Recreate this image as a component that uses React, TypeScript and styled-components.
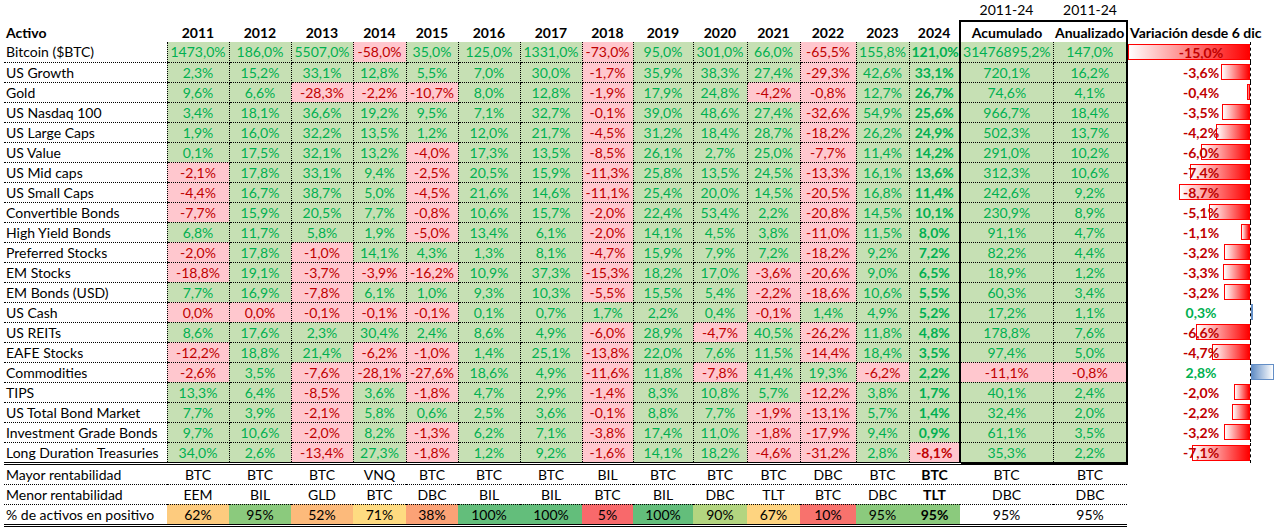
import React from 'react';
import styled, { createGlobalStyle, css } from 'styled-components';

type Tone = 'pos' | 'neg';

type Asset = {
  name: string;
  values: number[];
  acum: number;
  anual: number;
  change: number;
};

const YEARS = [2011, 2012, 2013, 2014, 2015, 2016, 2017, 2018, 2019, 2020, 2021, 2022, 2023, 2024];
const COL_WIDTHS = [163, 62, 62, 62, 53, 52, 62, 62, 51, 60, 54, 53, 56, 53, 51, 93, 74, 146];

// px per 1% on the data bar (15% fills the negative side)
const BAR_SCALE = 122 / 15;

const ASSETS: Asset[] = [
  { name: 'Bitcoin ($BTC)', values: [1473, 186, 5507, -58, 35, 125, 1331, -73, 95, 301, 66, -65.5, 155.8, 121], acum: 31476895.2, anual: 147, change: -15 },
  { name: 'US Growth', values: [2.3, 15.2, 33.1, 12.8, 5.5, 7, 30, -1.7, 35.9, 38.3, 27.4, -29.3, 42.6, 33.1], acum: 720.1, anual: 16.2, change: -3.6 },
  { name: 'Gold', values: [9.6, 6.6, -28.3, -2.2, -10.7, 8, 12.8, -1.9, 17.9, 24.8, -4.2, -0.8, 12.7, 26.7], acum: 74.6, anual: 4.1, change: -0.4 },
  { name: 'US Nasdaq 100', values: [3.4, 18.1, 36.6, 19.2, 9.5, 7.1, 32.7, -0.1, 39, 48.6, 27.4, -32.6, 54.9, 25.6], acum: 966.7, anual: 18.4, change: -3.5 },
  { name: 'US Large Caps', values: [1.9, 16, 32.2, 13.5, 1.2, 12, 21.7, -4.5, 31.2, 18.4, 28.7, -18.2, 26.2, 24.9], acum: 502.3, anual: 13.7, change: -4.2 },
  { name: 'US Value', values: [0.1, 17.5, 32.1, 13.2, -4, 17.3, 13.5, -8.5, 26.1, 2.7, 25, -7.7, 11.4, 14.2], acum: 291, anual: 10.2, change: -6 },
  { name: 'US Mid caps', values: [-2.1, 17.8, 33.1, 9.4, -2.5, 20.5, 15.9, -11.3, 25.8, 13.5, 24.5, -13.3, 16.1, 13.6], acum: 312.3, anual: 10.6, change: -7.4 },
  { name: 'US Small Caps', values: [-4.4, 16.7, 38.7, 5, -4.5, 21.6, 14.6, -11.1, 25.4, 20, 14.5, -20.5, 16.8, 11.4], acum: 242.6, anual: 9.2, change: -8.7 },
  { name: 'Convertible Bonds', values: [-7.7, 15.9, 20.5, 7.7, -0.8, 10.6, 15.7, -2, 22.4, 53.4, 2.2, -20.8, 14.5, 10.1], acum: 230.9, anual: 8.9, change: -5.1 },
  { name: 'High Yield Bonds', values: [6.8, 11.7, 5.8, 1.9, -5, 13.4, 6.1, -2, 14.1, 4.5, 3.8, -11, 11.5, 8], acum: 91.1, anual: 4.7, change: -1.1 },
  { name: 'Preferred Stocks', values: [-2, 17.8, -1, 14.1, 4.3, 1.3, 8.1, -4.7, 15.9, 7.9, 7.2, -18.2, 9.2, 7.2], acum: 82.2, anual: 4.4, change: -3.2 },
  { name: 'EM Stocks', values: [-18.8, 19.1, -3.7, -3.9, -16.2, 10.9, 37.3, -15.3, 18.2, 17, -3.6, -20.6, 9, 6.5], acum: 18.9, anual: 1.2, change: -3.3 },
  { name: 'EM Bonds (USD)', values: [7.7, 16.9, -7.8, 6.1, 1, 9.3, 10.3, -5.5, 15.5, 5.4, -2.2, -18.6, 10.6, 5.5], acum: 60.3, anual: 3.4, change: -3.2 },
  { name: 'US Cash', values: [0, 0, -0.1, -0.1, -0.1, 0.1, 0.7, 1.7, 2.2, 0.4, -0.1, 1.4, 4.9, 5.2], acum: 17.2, anual: 1.1, change: 0.3 },
  { name: 'US REITs', values: [8.6, 17.6, 2.3, 30.4, 2.4, 8.6, 4.9, -6, 28.9, -4.7, 40.5, -26.2, 11.8, 4.8], acum: 178.8, anual: 7.6, change: -6.6 },
  { name: 'EAFE Stocks', values: [-12.2, 18.8, 21.4, -6.2, -1, 1.4, 25.1, -13.8, 22, 7.6, 11.5, -14.4, 18.4, 3.5], acum: 97.4, anual: 5, change: -4.7 },
  { name: 'Commodities', values: [-2.6, 3.5, -7.6, -28.1, -27.6, 18.6, 4.9, -11.6, 11.8, -7.8, 41.4, 19.3, -6.2, 2.2], acum: -11.1, anual: -0.8, change: 2.8 },
  { name: 'TIPS', values: [13.3, 6.4, -8.5, 3.6, -1.8, 4.7, 2.9, -1.4, 8.3, 10.8, 5.7, -12.2, 3.8, 1.7], acum: 40.1, anual: 2.4, change: -2 },
  { name: 'US Total Bond Market', values: [7.7, 3.9, -2.1, 5.8, 0.6, 2.5, 3.6, -0.1, 8.8, 7.7, -1.9, -13.1, 5.7, 1.4], acum: 32.4, anual: 2, change: -2.2 },
  { name: 'Investment Grade Bonds', values: [9.7, 10.6, -2, 8.2, -1.3, 6.2, 7.1, -3.8, 17.4, 11, -1.8, -17.9, 9.4, 0.9], acum: 61.1, anual: 3.5, change: -3.2 },
  { name: 'Long Duration Treasuries', values: [34, 2.6, -13.4, 27.3, -1.8, 1.2, 9.2, -1.6, 14.1, 18.2, -4.6, -31.2, 2.8, -8.1], acum: 35.3, anual: 2.2, change: -7.1 },
];

const BEST = ['BTC', 'BTC', 'BTC', 'VNQ', 'BTC', 'BTC', 'BTC', 'BIL', 'BTC', 'BTC', 'BTC', 'DBC', 'BTC', 'BTC', 'BTC', 'BTC'];
const WORST = ['EEM', 'BIL', 'GLD', 'BTC', 'DBC', 'BIL', 'BIL', 'BTC', 'BIL', 'DBC', 'TLT', 'BTC', 'DBC', 'TLT', 'DBC', 'DBC'];
const POSITIVE = [62, 95, 52, 71, 38, 100, 100, 5, 100, 90, 67, 10, 95, 95, 95, 95];

const pct = (v: number) => `${v.toFixed(1).replace('.', ',')}%`;
const toneOf = (v: number): Tone => (v > 0 ? 'pos' : 'neg');

// three colour scale, red -> yellow -> green, midpoint at the 50th percentile
const mix = (a: number[], b: number[], t: number) => a.map((c, i) => Math.round(c + (b[i] - c) * t));
const scaleColor = (v: number) => {
  const red = [248, 105, 107];
  const yellow = [255, 235, 132];
  const green = [99, 190, 123];
  const min = 5;
  const mid = 80.5;
  const max = 100;
  const c = v <= mid ? mix(red, yellow, (v - min) / (mid - min)) : mix(yellow, green, (v - mid) / (max - mid));
  return `rgb(${c.join(',')})`;
};

const GlobalStyle = createGlobalStyle`
  body {
    margin: 0;
    background: #ffffff;
    font-family: Lato, "Liberation Sans", sans-serif;
    color: #000000;
  }
`;

const Sheet = styled.table`
  margin-left: 4px;
  border-collapse: collapse;
  table-layout: fixed;
  width: 1269px;
  font-size: 14px;
  white-space: nowrap;

  td {
    height: 20px;
    padding: 1px 2px 0;
    box-sizing: border-box;
    line-height: 18px;
    vertical-align: middle;
  }
`;

const boxSide = (side?: 'left' | 'right') =>
  side === 'left'
    ? css`border-left: 2px solid #000;`
    : side === 'right'
      ? css`border-right: 2px solid #000;`
      : '';

const CaptionCell = styled.td`
  && {
    height: 21px;
    padding-top: 0;
  }
  text-align: center;
`;

const HeadCell = styled.td<{ $align?: 'left' | 'center'; $box?: 'left' | 'right' }>`
  && {
    padding-top: 2px;
  }
  font-weight: 700;
  text-align: ${(p) => p.$align ?? 'center'};
  overflow: visible;
  ${(p) => p.$box && css`border-top: 2px solid #000;`}
  ${(p) => boxSide(p.$box)}
`;

const NameCell = styled.td<{ $last?: boolean }>`
  text-align: left;
  border-bottom: ${(p) => (p.$last ? '3px double #000' : '1px dotted #000')};
`;

const ValueCell = styled.td<{ $tone: Tone; $bold?: boolean; $last?: boolean; $box?: 'left' | 'right' }>`
  text-align: center;
  background: ${(p) => (p.$tone === 'pos' ? '#c6e0b4' : '#ffc7ce')};
  color: ${(p) => (p.$tone === 'pos' ? '#00b050' : '#c00000')};
  font-weight: ${(p) => (p.$bold ? 700 : 400)};
  border-left: 1px dotted #000;
  border-right: 1px dotted #000;
  border-bottom: ${(p) =>
    p.$last ? (p.$box ? '3px solid #000' : '3px double #000') : '1px dotted #000'};
  ${(p) => boxSide(p.$box)}
`;

const SummaryCell = styled.td<{ $bold?: boolean; $align?: 'left' | 'center' }>`
  text-align: ${(p) => p.$align ?? 'center'};
  font-weight: ${(p) => (p.$bold ? 700 : 400)};
  border-bottom: 1px dotted #000;
`;

const ScaleCell = styled.td<{ $fill?: string; $bold?: boolean; $align?: 'left' | 'center' }>`
  text-align: ${(p) => p.$align ?? 'center'};
  font-weight: ${(p) => (p.$bold ? 700 : 400)};
  background: ${(p) => p.$fill ?? 'transparent'};
  border-bottom: 3px double #000;
`;

const VarCell = styled.td`
  && {
    padding: 0;
  }
`;

const VarStack = styled.div`
  display: grid;
  height: 20px;
  grid-template-columns: 1fr;
`;

const BarTrack = styled.div`
  grid-area: 1 / 1;
  display: grid;
  grid-template-columns: 123px 23px;
`;

const NegZone = styled.div`
  display: flex;
  justify-content: flex-end;
  align-items: center;
  border-right: 1px dashed #000;
`;

const PosZone = styled.div`
  display: flex;
  align-items: center;
`;

const Bar = styled.div<{ $tone: Tone }>`
  height: 16px;
  box-sizing: border-box;
  ${(p) =>
    p.$tone === 'neg'
      ? css`
          border: 1px solid #ff0000;
          background: linear-gradient(to right, #ffffff, #ff0000);
        `
      : css`
          border: 1px solid #638ec6;
          background: linear-gradient(to right, #638ec6, #ffffff);
        `}
`;

const VarLabel = styled.div<{ $tone: Tone }>`
  grid-area: 1 / 1;
  z-index: 1;
  align-self: center;
  padding-top: 1px;
  text-align: center;
  font-weight: 700;
  color: ${(p) => (p.$tone === 'pos' ? '#00b050' : '#c00000')};
`;

const ChangeBar = ({ value }: { value: number }) => {
  const width = Math.max(2, Math.round(Math.abs(value) * BAR_SCALE));
  const tone = toneOf(value);
  return (
    <VarStack>
      <BarTrack>
        <NegZone>{tone === 'neg' && <Bar $tone="neg" style={{ width }} />}</NegZone>
        <PosZone>{tone === 'pos' && <Bar $tone="pos" style={{ width }} />}</PosZone>
      </BarTrack>
      <VarLabel $tone={tone}>{pct(value)}</VarLabel>
    </VarStack>
  );
};

const App = () => {
  const last = ASSETS.length - 1;
  return (
    <>
      <GlobalStyle />
      <Sheet>
        <colgroup>
          {COL_WIDTHS.map((w, i) => (
            <col key={i} style={{ width: w }} />
          ))}
        </colgroup>
        <tbody>
          <tr>
            <CaptionCell colSpan={15} />
            <CaptionCell>2011-24</CaptionCell>
            <CaptionCell>2011-24</CaptionCell>
            <CaptionCell />
          </tr>
          <tr>
            <HeadCell $align="left">Activo</HeadCell>
            {YEARS.map((y) => (
              <HeadCell key={y}>{y}</HeadCell>
            ))}
            <HeadCell $box="left">Acumulado</HeadCell>
            <HeadCell $box="right">Anualizado</HeadCell>
            <HeadCell $align="left">Variación desde 6 dic</HeadCell>
          </tr>
          {ASSETS.map((a, r) => (
            <tr key={a.name}>
              <NameCell $last={r === last}>{a.name}</NameCell>
              {a.values.map((v, i) => (
                <ValueCell key={i} $tone={toneOf(v)} $bold={i === YEARS.length - 1} $last={r === last}>
                  {pct(v)}
                </ValueCell>
              ))}
              <ValueCell $tone={toneOf(a.acum)} $box="left" $last={r === last}>
                {pct(a.acum)}
              </ValueCell>
              <ValueCell $tone={toneOf(a.anual)} $box="right" $last={r === last}>
                {pct(a.anual)}
              </ValueCell>
              <VarCell>
                <ChangeBar value={a.change} />
              </VarCell>
            </tr>
          ))}
          <tr>
            <SummaryCell $align="left">Mayor rentabilidad</SummaryCell>
            {BEST.map((t, i) => (
              <SummaryCell key={i} $bold={i === YEARS.length - 1}>
                {t}
              </SummaryCell>
            ))}
            <td />
          </tr>
          <tr>
            <SummaryCell $align="left">Menor rentabilidad</SummaryCell>
            {WORST.map((t, i) => (
              <SummaryCell key={i} $bold={i === YEARS.length - 1}>
                {t}
              </SummaryCell>
            ))}
            <td />
          </tr>
          <tr>
            <ScaleCell $align="left">% de activos en positivo</ScaleCell>
            {POSITIVE.map((v, i) => (
              <ScaleCell
                key={i}
                $bold={i === YEARS.length - 1}
                $fill={i < YEARS.length ? scaleColor(v) : undefined}
              >
                {v}%
              </ScaleCell>
            ))}
            <td />
          </tr>
        </tbody>
      </Sheet>
    </>
  );
};

export default App;
